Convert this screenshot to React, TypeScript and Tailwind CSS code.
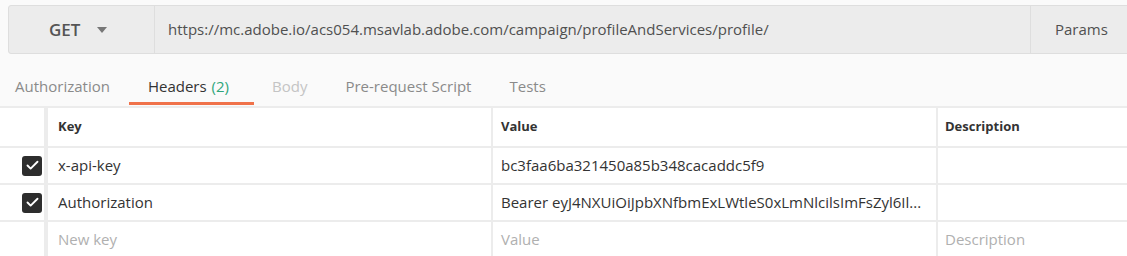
import { Check } from 'lucide-react';

type Header = {
    key: string;
    value: string;
    description: string;
    enabled: boolean;
};

const headers: Header[] = [
    { key: 'x-api-key', value: 'bc3faa6ba321450a85b348cacaddc5f9', description: '', enabled: true },
    { key: 'Authorization', value: 'Bearer eyJ4NXUiOiJpbXNfbmExLWtleS0xLmNlcilsImFsZyl6Il...', description: '', enabled: true },
];

const tabs = ['Authorization', 'Headers', 'Body', 'Pre-request Script', 'Tests'];

function Checkbox() {
    return (
        <div className="flex h-[20px] w-[20px] items-center justify-center rounded-[3px] bg-[#2d2d2d]">
            <Check size={15} strokeWidth={3} className="text-white" />
        </div>
    );
}

export default function App() {
    return (
        <div className="h-[256px] w-[1127px] overflow-hidden bg-[#fafafa] text-[15px] text-[#505050]" style={{ fontFamily: '"Open Sans", sans-serif' }}>
            <div className="pl-[8px] pt-[5px]">
                <div className="flex h-[49px] w-[1140px] rounded-l-[3px] border border-[#dedede] bg-[#ececec]">
                    <div className="flex w-[146px] shrink-0 items-center border-r border-[#dedede] pl-[40px]">
                        <span className="text-[17px] font-semibold text-[#555]">GET</span>
                        <span className="ml-[17px] mt-[1px] h-0 w-0 border-x-[5px] border-t-[6px] border-x-transparent border-t-[#777]" />
                    </div>
                    <div className="flex flex-1 items-center pl-[13px]">
                        https://mc.adobe.io/acs054.msavlab.adobe.com/campaign/profileAndServices/profile/
                    </div>
                    <div className="flex w-[117px] shrink-0 items-center border-l border-[#dedede] pl-[24px]">
                        Params
                    </div>
                </div>
            </div>

            <div className="flex h-[52px] items-stretch pl-[15px]">
                {tabs.map((tab) => (
                    <div
                        key={tab}
                        className={
                            tab === 'Headers'
                                ? 'relative -ml-[19px] mr-[18px] flex items-center pl-[19px] pr-[25px] pt-[12px] text-[#333]'
                                : tab === 'Body'
                                    ? 'mr-[38px] flex items-center pt-[12px] text-[#c4c4c4]'
                                    : 'mr-[38px] flex items-center pt-[12px] text-[#8a8a8a]'
                        }
                    >
                        {tab}
                        {tab === 'Headers' && <span className="ml-[5px] text-[#2fa67a]">(2)</span>}
                        {tab === 'Headers' && <span className="absolute bottom-[1px] left-0 right-0 h-[3px] bg-[#f0724a]" />}
                    </div>
                ))}
            </div>

            <div className="border-t-2 border-[#ececec] bg-white">
                <div className="grid grid-cols-[48px_445px_445px_1fr]">
                    <div className="h-[38px] border-r-[4px] border-[#ececec]" />
                    <div className="flex h-[38px] items-center border-r-2 border-[#ececec] pl-[10px] text-[13px] font-bold text-[#333]">Key</div>
                    <div className="flex h-[38px] items-center border-r-2 border-[#ececec] pl-[8px] text-[13px] font-bold text-[#333]">Value</div>
                    <div className="flex h-[38px] items-center pl-[7px] text-[13px] font-bold text-[#333]">Description</div>

                    {headers.map((h) => (
                        <div key={h.key} className="contents">
                            <div className="flex h-[37px] items-center justify-end border-r-[4px] border-t-2 border-[#ececec] pr-[2px]">
                                {h.enabled && <Checkbox />}
                            </div>
                            <div className="flex h-[37px] items-center border-r-2 border-t-2 border-[#ececec] pl-[10px] text-[#333]">{h.key}</div>
                            <div className="flex h-[37px] items-center overflow-hidden whitespace-nowrap border-r-2 border-t-2 border-[#ececec] pl-[8px] text-[#333]">{h.value}</div>
                            <div className="flex h-[37px] items-center border-t-2 border-[#ececec] pl-[7px]">{h.description}</div>
                        </div>
                    ))}

                    <div className="h-[37px] border-r-[4px] border-t-2 border-[#ececec]" />
                    <div className="flex h-[37px] items-center border-r-2 border-t-2 border-[#ececec] pl-[10px] text-[#b0b0b0]">New key</div>
                    <div className="flex h-[37px] items-center border-r-2 border-t-2 border-[#ececec] pl-[8px] text-[#b0b0b0]">Value</div>
                    <div className="flex h-[37px] items-center border-t-2 border-[#ececec] pl-[7px] text-[#b0b0b0]">Description</div>
                </div>
            </div>
        </div>
    );
}
